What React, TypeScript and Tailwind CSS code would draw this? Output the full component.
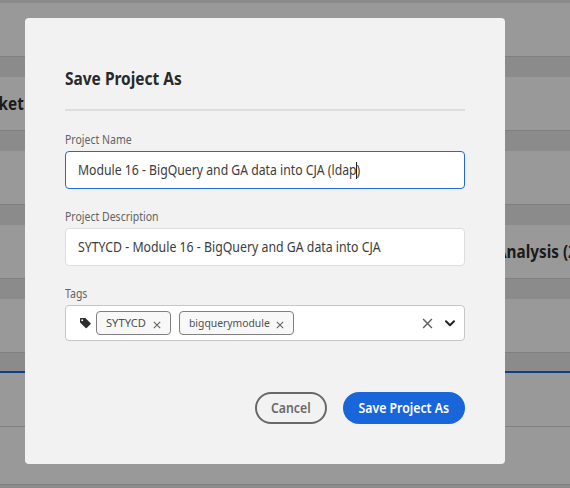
import React from "react";

function Row({ height, children }: { height: string; children?: React.ReactNode }) {
  return (
    <div className={`${height} flex shrink-0 items-center justify-between overflow-hidden whitespace-nowrap border-b border-[#808080] bg-[#999999] text-[17px] font-bold text-[#1b1b1b]`}>
      {children}
    </div>
  );
}

function Label({ children }: { children: React.ReactNode }) {
  return <div className="h-4 origin-left scale-x-[0.875] whitespace-nowrap text-[12px] leading-4 text-[#636363]">{children}</div>;
}

function Cross({ className }: { className: string }) {
  return (
    <svg viewBox="0 0 10 10" className={className} fill="none" stroke="#5f5f5f" strokeWidth="1.3">
      <path d="M1 1L9 9M9 1L1 9" />
    </svg>
  );
}

function Tag({ text, width, scale }: { text: string; width: string; scale: string }) {
  return (
    <div className={`${width} flex h-6 items-center justify-between rounded-[4px] border border-[#808080] bg-[#f8f8f8] pr-[9px] pl-[9px]`}>
      <span className={`${scale} w-0 origin-left whitespace-nowrap text-[11.5px] leading-4 text-[#505050]`}>{text}</span>
      <Cross className="mt-[3px] size-[8px]" />
    </div>
  );
}

export default function App() {
  return (
    <div className="relative h-[488px] w-[570px] overflow-hidden bg-[#8b8b8b] font-['Noto_Sans','Open_Sans',sans-serif]">
      <div className="flex flex-col gap-5 pt-[3px]">
        <Row height="h-[54px]" />
        <Row height="h-[54px]">
          <span className="flex w-[24px] justify-end"><span className="origin-right scale-x-[0.9]">Market</span></span>
        </Row>
        <Row height="h-[54px]" />
        <Row height="h-[54px]">
          <span />
          <span className="w-[74px] origin-left scale-x-[0.9]">Analysis (2)</span>
        </Row>
        <Row height="h-[54px]" />
      </div>
      <div className="mt-[18px] border-t-2 border-[#0f3f88]">
        <Row height="h-[54px]" />
        <Row height="h-[58px]" />
      </div>

      <div role="dialog" className="absolute top-[18px] left-[25px] flex h-[446px] w-[480px] flex-col rounded-[4px] bg-[#f2f2f2] px-10 pt-[49px]">
        <h1 className="h-6 origin-left scale-x-[0.91] whitespace-nowrap text-[17px] leading-6 font-bold text-[#292929]">Save Project As</h1>
        <div className="mt-[18px] h-[2px] shrink-0 bg-[#dedede]" />
        <div className="mt-[21px]"><Label>Project Name</Label></div>
        <div className="mt-[3px] flex h-[38px] shrink-0 items-center rounded-[4px] border border-[#2268d8] bg-white pl-3">
          <div className="flex origin-left scale-x-[0.906] items-center whitespace-nowrap text-[13.5px] text-[#3c3c3c]">
            <span>Module 16 - BigQuery and GA data into CJA (ldap</span>
            <span className="-mr-px h-[17px] w-px bg-black" />
            <span>)</span>
          </div>
        </div>
        <div className="mt-5"><Label>Project Description</Label></div>
        <div className="mt-[3px] flex h-[38px] shrink-0 items-center rounded-[4px] border border-[#dddddd] bg-white pl-3">
          <span className="origin-left scale-x-[0.912] whitespace-nowrap text-[13.5px] text-[#3c3c3c]">SYTYCD - Module 16 - BigQuery and GA data into CJA</span>
        </div>
        <div className="mt-5"><Label>Tags</Label></div>
        <div className="mt-[3px] flex h-9 shrink-0 items-center rounded-[4px] border border-[#c6c6c6] bg-white pr-[9px] pl-[14px]">
          <svg viewBox="0 0 11 11" className="mt-px size-[11px]" fill="#2c2c2c">
            <path fillRule="evenodd" d="M.7 0H5.3L10.7 5.3Q11 5.7 10.7 6.1L6.7 10Q6.2 10.5 5.7 10L.3 4.8Q0 4.5 0 4V.7Q0 0 .7 0ZM2.2 1.2A1 1 0 1 0 2.2 3.2A1 1 0 1 0 2.2 1.2Z" />
          </svg>
          <div className="ml-[5px] flex gap-2">
            <Tag text="SYTYCD" width="w-[75px]" scale="scale-x-[0.97]" />
            <Tag text="bigquerymodule" width="w-[115px]" scale="scale-x-[0.9]" />
          </div>
          <Cross className="ml-auto size-[11px]" />
          <svg viewBox="0 0 10 7" className="mt-px ml-3 h-[7px] w-[10px]" fill="none" stroke="#222222" strokeWidth="2" strokeLinecap="round" strokeLinejoin="round">
            <path d="M1 1.2L5 5.2L9 1.2" />
          </svg>
        </div>
        <div className="mt-[51px] flex justify-end gap-4 text-[13.5px] font-semibold">
          <button className="flex h-8 w-[72px] items-center justify-center rounded-full border-2 border-[#686868] text-[#6a6a6a]"><span className="scale-x-[0.91]">Cancel</span></button>
          <button className="flex h-8 w-[122px] items-center justify-center rounded-full bg-[#1966db] whitespace-nowrap text-white"><span className="scale-x-[0.91]">Save Project As</span></button>
        </div>
      </div>
    </div>
  );
}
